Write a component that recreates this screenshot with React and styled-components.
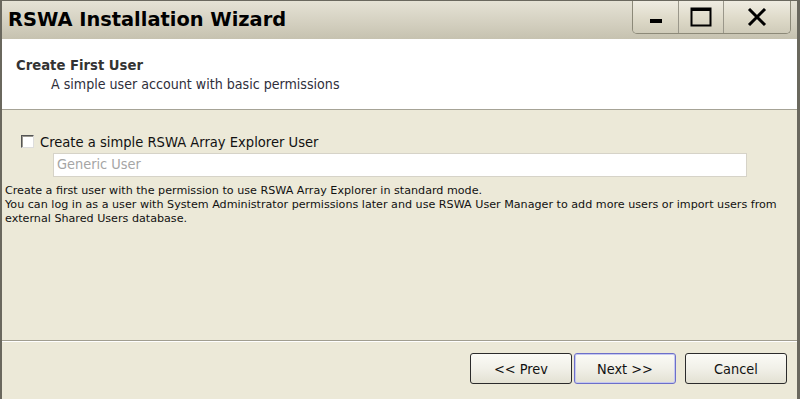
import React from "react";
import styled, { createGlobalStyle } from "styled-components";

const Global = createGlobalStyle`
  html, body { margin: 0; padding: 0; background: #ece9d8; }
  body { font-family: "DejaVu Sans Condensed", "DejaVu Sans", sans-serif; }
  * { box-sizing: border-box; }
`;

const Window = styled.div`
  width: 800px;
  height: 399px;
  display: flex;
  flex-direction: column;
  border-left: 2px solid #6a685e;
  border-right: 3px solid #6a685e;
  border-top: 1px solid #6a685e;
  background: #ece9d8;
  overflow: hidden;
`;

const TitleBar = styled.div`
  height: 38px;
  flex: none;
  display: flex;
  align-items: flex-start;
  justify-content: space-between;
  background: linear-gradient(#e5e2d5, #d3cfbf 60%, #c6c2b0);
  padding-left: 6px;
  padding-right: 6px;
`;

const Title = styled.div`
  font-family: "DejaVu Sans", sans-serif;
  font-weight: bold;
  font-size: 19.4px;
  color: #000;
  line-height: 38px;
`;

const Controls = styled.div`
  display: flex;
  height: 33px;
  border: 1px solid #8c8978;
  border-top: none;
  border-radius: 0 0 5px 5px;
  overflow: hidden;
`;

const CtrlButton = styled.div`
  width: ${(p) => p.$w}px;
  height: 100%;
  display: flex;
  align-items: center;
  justify-content: center;
  background: linear-gradient(#efece1, #dedac9 55%, #cfcbb9);
  & + & { border-left: 1px solid #9a978a; }
`;

const Header = styled.div`
  height: 71px;
  flex: none;
  background: #fff;
  border-bottom: 1px solid #a6a396;
  padding: 17px 0 0 14px;
`;

const HeaderTitle = styled.div`
  font-family: "DejaVu Sans Condensed", "DejaVu Sans", sans-serif;
  font-weight: bold;
  font-size: 14.7px;
  color: #333;
  line-height: 17px;
`;

const HeaderSub = styled.div`
  font-size: 14.1px;
  color: #2e2e3a;
  line-height: 18px;
  padding-left: 35px;
  margin-top: 2px;
`;

const Body = styled.div`
  flex: 1;
  padding: 22px 0 0 3px;
  display: flex;
  flex-direction: column;
  border-bottom: 1px solid #a19e90;
  box-shadow: 0 1px 0 #fff;
`;

const CheckRow = styled.label`
  display: flex;
  align-items: center;
  gap: 6px;
  padding-left: 16px;
  height: 18px;
`;

const CheckBox = styled.span`
  width: 13px;
  height: 13px;
  border: 1px solid #555;
  border-right-color: #ddd;
  border-bottom-color: #ddd;
  background: #fff;
  box-shadow: inset 1px 1px 0 #9a9890;
`;

const CheckLabel = styled.span`
  font-size: 14.6px;
  color: #111;
`;

const TextInput = styled.div`
  margin: 3px 0 0 48px;
  width: 694px;
  height: 24px;
  background: #fff;
  border: 1px solid #d6d3c8;
  font-size: 14.4px;
  color: #a5a5a5;
  padding-left: 3px;
  line-height: 21px;
`;

const Description = styled.div`
  margin-top: 7px;
  font-family: "DejaVu Sans", sans-serif;
  font-size: 11.15px;
  line-height: 14px;
  color: #111;
`;

const Footer = styled.div`
  height: 58px;
  flex: none;
  display: flex;
  justify-content: flex-end;
  align-items: flex-start;
  padding: 12px 10px 0 0;
`;

const Button = styled.button`
  width: 102px;
  height: 31px;
  border-radius: 3px;
  border: 1px solid ${(p) => (p.$default ? "#6c6fc9" : "#2b2b2b")};
  box-shadow: ${(p) => (p.$default ? "inset 0 0 0 1px #c5c8f0" : "none")};
  background: linear-gradient(#fbfbf6, #f1f0e8 50%, #e3e1d3);
  font-family: "DejaVu Sans Condensed", "DejaVu Sans", sans-serif;
  font-size: 14.4px;
  color: #111;
  padding: 0;
  margin-left: ${(p) => p.$gap}px;
`;

export default function App() {
  return (
    <>
      <Global />
      <Window>
        <TitleBar>
          <Title>RSWA Installation Wizard</Title>
          <Controls>
            <CtrlButton $w={45}>
              <svg width="14" height="14" viewBox="0 0 14 14">
                <rect x="1" y="9" width="12" height="4" fill="#000" />
              </svg>
            </CtrlButton>
            <CtrlButton $w={45}>
              <svg width="22" height="20" viewBox="0 0 22 20">
                <rect x="1.5" y="1.5" width="19" height="17" fill="none" stroke="#000" strokeWidth="2" />
                <rect x="1" y="1" width="20" height="3" fill="#000" />
              </svg>
            </CtrlButton>
            <CtrlButton $w={67}>
              <svg width="20" height="18" viewBox="0 0 20 18">
                <path d="M2 1 L18 17 M18 1 L2 17" stroke="#000" strokeWidth="3" />
              </svg>
            </CtrlButton>
          </Controls>
        </TitleBar>
        <Header>
          <HeaderTitle>Create First User</HeaderTitle>
          <HeaderSub>A simple user account with basic permissions</HeaderSub>
        </Header>
        <Body>
          <CheckRow>
            <CheckBox />
            <CheckLabel>Create a simple RSWA Array Explorer User</CheckLabel>
          </CheckRow>
          <TextInput>Generic User</TextInput>
          <Description>
            Create a first user with the permission to use RSWA Array Explorer in standard mode.
            <br />
            You can log in as a user with System Administrator permissions later and use RSWA User Manager to add more users or import users from
            <br />
            external Shared Users database.
          </Description>
        </Body>
        <Footer>
          <Button $gap={0}>&lt;&lt; Prev</Button>
          <Button $gap={2} $default>Next &gt;&gt;</Button>
          <Button $gap={9}>Cancel</Button>
        </Footer>
      </Window>
    </>
  );
}
